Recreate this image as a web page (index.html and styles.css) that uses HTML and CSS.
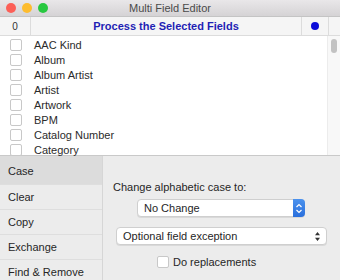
FILE: index.html
```html
<!DOCTYPE html>
<html lang="en">
<head>
    <meta charset="UTF-8">
    <meta name="viewport" content="width=device-width, initial-scale=1.0">
    <title>Multi Field Editor</title>
    <link rel="stylesheet" href="styles.css">
</head>
<body>
    <div class="window">
        <div class="titlebar">
            <div class="lights">
                <span class="light red"></span>
                <span class="light yellow"></span>
                <span class="light green"></span>
            </div>
            <div class="title">Multi Field Editor</div>
        </div>

        <div class="header">
            <div class="count">0</div>
            <div class="action">Process the Selected Fields</div>
            <div class="dot-cell"><span class="dot"></span></div>
            <div class="end-cell"></div>
        </div>

        <div class="list">
            <div class="rows">
                <div class="row"><span class="check"></span><span>AAC Kind</span></div>
                <div class="row"><span class="check"></span><span>Album</span></div>
                <div class="row"><span class="check"></span><span>Album Artist</span></div>
                <div class="row"><span class="check"></span><span>Artist</span></div>
                <div class="row"><span class="check"></span><span>Artwork</span></div>
                <div class="row"><span class="check"></span><span>BPM</span></div>
                <div class="row"><span class="check"></span><span>Catalog Number</span></div>
                <div class="row"><span class="check"></span><span>Category</span></div>
            </div>
            <div class="scroll"><span class="thumb"></span></div>
        </div>

        <div class="bottom">
            <div class="sidebar">
                <div class="tab selected">Case</div>
                <div class="tab">Clear</div>
                <div class="tab">Copy</div>
                <div class="tab">Exchange</div>
                <div class="tab">Find &amp; Remove</div>
            </div>
            <div class="panel">
                <div class="label">Change alphabetic case to:</div>
                <div class="popup case-popup">
                    <span class="popup-text">No Change</span>
                    <span class="stepper">
                        <svg width="8" height="11" viewBox="0 0 8 11">
                            <path d="M1.5 4 L4 1.5 L6.5 4 M1.5 7 L4 9.5 L6.5 7" fill="none" stroke="#fff" stroke-width="1.2"/>
                        </svg>
                    </span>
                </div>
                <div class="popup field-popup">
                    <span class="popup-text">Optional field exception</span>
                    <svg class="arrows" width="7" height="11" viewBox="0 0 7 11">
                        <path d="M3.5 1 L6 4.2 L1 4.2 Z M3.5 10 L6 6.8 L1 6.8 Z" fill="#333"/>
                    </svg>
                </div>
                <div class="option">
                    <span class="check"></span>
                    <span>Do replacements</span>
                </div>
            </div>
        </div>
    </div>
</body>
</html>
```

FILE: styles.css
```css
body {
    margin: 0;
    font-family: "Liberation Sans", Arial, sans-serif;
    font-size: 11px;
    color: #262626;
}
.window {
    width: 340px;
    height: 280px;
    display: flex;
    flex-direction: column;
    background: #ececec;
    overflow: hidden;
}
.titlebar {
    height: 16px;
    flex-shrink: 0;
    display: flex;
    align-items: center;
    background: linear-gradient(#e9e7e9, #d5d3d5);
    border-bottom: 1px solid #c4c4c4;
    position: relative;
}
.lights {
    display: flex;
    gap: 6px;
    padding-left: 6px;
}
.light {
    width: 10px;
    height: 10px;
    border-radius: 50%;
}
.red { background: #fc5f57; }
.yellow { background: #fdbc2e; }
.green { background: #28c840; }
.title {
    position: absolute;
    left: 0;
    right: 0;
    text-align: center;
    color: #4a4a4a;
    font-size: 11px;
}
.header {
    height: 18px;
    flex-shrink: 0;
    display: flex;
    background: #f5f5f5;
    border-bottom: 1px solid #dcdcdc;
}
.count {
    width: 30px;
    border-right: 1px solid #dcdcdc;
    display: flex;
    align-items: center;
    justify-content: center;
    font-size: 10px;
    color: #333;
}
.action {
    flex: 1;
    display: flex;
    align-items: center;
    justify-content: center;
    font-weight: bold;
    color: #1f1fb4;
}
.dot-cell {
    width: 26px;
    border-left: 1px solid #dcdcdc;
    display: flex;
    align-items: center;
    justify-content: center;
}
.dot {
    width: 8px;
    height: 8px;
    border-radius: 50%;
    background: #0b0bd9;
}
.end-cell {
    width: 11px;
    border-left: 1px solid #dcdcdc;
}
.list {
    height: 119px;
    flex-shrink: 0;
    display: flex;
    background: #fff;
    border-bottom: 1px solid #c9c9c9;
}
.rows {
    flex: 1;
    padding-top: 1px;
}
.row {
    height: 15px;
    display: flex;
    align-items: center;
    gap: 12px;
    padding-left: 10px;
    color: #2b2b2b;
}
.check {
    width: 10px;
    height: 10px;
    border: 1px solid #c8c8c8;
    border-radius: 2px;
    background: #fff;
}
.scroll {
    width: 12px;
    background: #f8f8f8;
    border-left: 1px solid #ececec;
    display: flex;
    justify-content: center;
    padding-top: 3px;
}
.thumb {
    width: 6px;
    height: 14px;
    border-radius: 3px;
    background: #c2c2c2;
}
.bottom {
    flex: 1;
    display: flex;
    min-height: 0;
}
.sidebar {
    width: 102px;
    border-right: 1px solid #d6d6d6;
    display: flex;
    flex-direction: column;
}
.tab {
    height: 24px;
    flex-shrink: 0;
    border-bottom: 1px solid #dedede;
    display: flex;
    align-items: center;
    padding-left: 8px;
    color: #262626;
}
.tab.selected {
    box-sizing: border-box;
    height: 29px;
    padding-top: 2px;
    background: #dcdcdc;
}
.panel {
    flex: 1;
    display: flex;
    flex-direction: column;
    padding: 25px 0 0 10px;
}
.label {
    height: 12px;
    line-height: 12px;
}
.popup {
    height: 16px;
    display: flex;
    align-items: center;
    background: #fff;
    border: 1px solid #cfcfcf;
    border-radius: 4px;
    box-shadow: 0 1px 0 rgba(0,0,0,0.08);
}
.popup-text {
    flex: 1;
    padding-left: 6px;
}
.case-popup {
    width: 166px;
    margin: 6px 0 0 24px;
}
.stepper {
    width: 12px;
    height: 18px;
    margin: -1px -1px -1px 0;
    background: linear-gradient(#4b92ee, #2a6fdc);
    border-radius: 0 4px 4px 0;
    display: flex;
    align-items: center;
    justify-content: center;
}
.field-popup {
    width: 209px;
    margin: 10px 0 0 3px;
}
.arrows {
    margin-right: 5px;
}
.option {
    display: flex;
    align-items: center;
    gap: 4px;
    margin: 11px 0 0 44px;
}
```
